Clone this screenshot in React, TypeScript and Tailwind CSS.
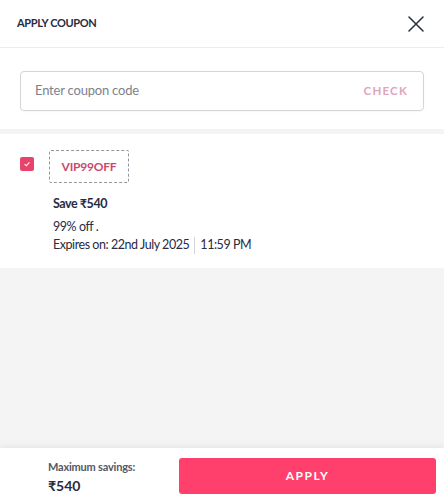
const font = { fontFamily: 'Lato, "Noto Sans", sans-serif' };

function CheckBox() {
  return (
    <span className="mt-[7px] flex h-[14px] w-[14px] shrink-0 items-center justify-center rounded-[2px] bg-[#e8436a]">
      <svg width="8" height="8" viewBox="0 0 10 10" fill="none" stroke="white" strokeWidth="1.4">
        <path d="M2 5.2 L4.2 7.2 L8 3" />
      </svg>
    </span>
  );
}

function CloseIcon() {
  return (
    <svg width="16" height="16" viewBox="0 0 16 16" fill="none" stroke="#282c3f" strokeWidth="1.5" strokeLinecap="round">
      <path d="M1 1 L15 15 M15 1 L1 15" />
    </svg>
  );
}

export default function App() {
  return (
    <div className="flex h-[500px] w-[444px] flex-col bg-[#f4f4f5] text-[#282c3f]" style={font}>
      <div className="flex h-[48px] items-center justify-between border-b border-[#ececee] bg-white pl-[17px] pr-[20px]">
        <span className="text-[11px] font-bold tracking-[-0.35px]">APPLY COUPON</span>
        <CloseIcon />
      </div>

      <div className="bg-white px-[20px] pb-[18px] pt-[23px]">
        <div className="flex h-[40px] items-center justify-between rounded-[4px] border border-[#d4d5d9] pl-[14px] pr-[15px] shadow-[0_1px_2px_rgba(0,0,0,0.04)]">
          <span className="text-[13px] tracking-[-0.2px] text-[#7e818c]">Enter coupon code</span>
          <span className="text-[11.5px] font-bold tracking-[1.2px] text-[#dfa5ba]">CHECK</span>
        </div>
      </div>

      <div className="mt-[5px] flex gap-[15px] bg-white pb-[14px] pl-[20px] pt-[16px]">
        <CheckBox />
        <div className="flex flex-col">
          <div className="flex h-[33px] w-[80px] items-center justify-center rounded-[2px] border border-dashed border-[#94969f]">
            <span className="text-[12px] font-bold tracking-[-0.2px] text-[#c9496f]">VIP99OFF</span>
          </div>
          <div className="mt-[12px] pl-[4px] text-[12.5px] leading-[18px] tracking-[-0.45px]">
            <div className="font-bold">Save ₹540</div>
            <div className="mt-[5px]">99% off .</div>
            <div className="flex items-center">
              <span>Expires on: 22nd July 2025</span>
              <span className="mx-[5px] h-[17px] w-px bg-[#d4d5d9]" />
              <span>11:59 PM</span>
            </div>
          </div>
        </div>
      </div>

      <div className="flex-1" />

      <div className="flex h-[52px] items-start bg-white pl-[48px] pr-[8px] shadow-[0_-2px_6px_rgba(0,0,0,0.06)]">
        <div className="mt-[12px] flex w-[131px] flex-col">
          <span className="text-[11px] font-bold leading-[14px] tracking-[-0.2px] text-[#535766]">Maximum savings:</span>
          <span className="mt-[3px] text-[14px] font-bold leading-[18px]">₹540</span>
        </div>
        <button className="mt-[10px] flex h-[36px] flex-1 items-center justify-center rounded-[3px] bg-[#ff3f6c] text-[12px] font-bold tracking-[1.5px] text-white">
          APPLY
        </button>
      </div>
    </div>
  );
}
